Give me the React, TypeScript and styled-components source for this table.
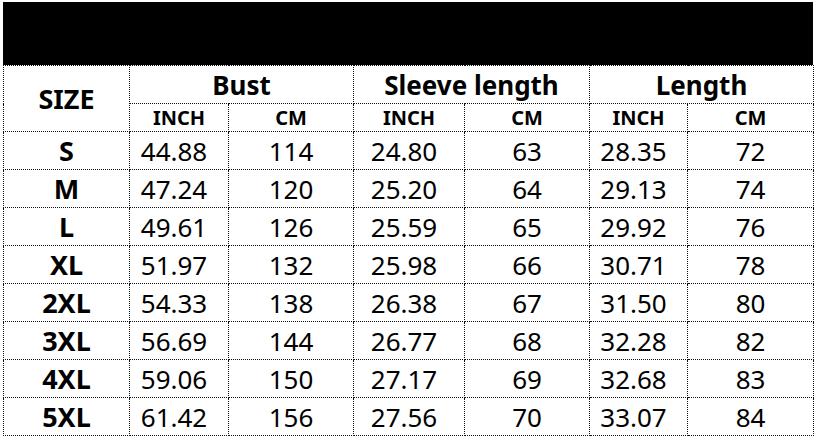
import styled, { createGlobalStyle } from "styled-components";

const GlobalStyle = createGlobalStyle`
  html, body {
    margin: 0;
    background: #fff;
  }
  body {
    padding: 2px 0 0 3px;
    font-family: "Noto Sans", "Open Sans", sans-serif;
    color: #000;
  }
`;

const Sheet = styled.div`
  width: 810px;
`;

const Banner = styled.div`
  height: 63px;
  background: #000;
`;

const Table = styled.table`
  width: 810px;
  table-layout: fixed;
  border-collapse: collapse;
`;

const Cell = styled.td<{ $bold?: boolean; $size?: number; $shift?: number }>`
  border: 1px dotted #111;
  padding: 0 ${(p) => p.$shift || 0}px 0 0;
  text-align: center;
  vertical-align: middle;
  white-space: nowrap;
  font-size: ${(p) => p.$size || 26}px;
  font-weight: ${(p) => (p.$bold ? 700 : 400)};
  line-height: 1;
`;

const GroupRow = styled.tr`
  height: 38px;
`;

const UnitRow = styled.tr`
  height: 28px;
`;

const DataRow = styled.tr`
  height: 38px;
`;

const widths = [126, 99, 125, 111, 125, 98, 126];

const rows: [string, string, string, string, string, string, string][] = [
  ["S", "44.88", "114", "24.80", "63", "28.35", "72"],
  ["M", "47.24", "120", "25.20", "64", "29.13", "74"],
  ["L", "49.61", "126", "25.59", "65", "29.92", "76"],
  ["XL", "51.97", "132", "25.98", "66", "30.71", "78"],
  ["2XL", "54.33", "138", "26.38", "67", "31.50", "80"],
  ["3XL", "56.69", "144", "26.77", "68", "32.28", "82"],
  ["4XL", "59.06", "150", "27.17", "69", "32.68", "83"],
  ["5XL", "61.42", "156", "27.56", "70", "33.07", "84"],
];

function App() {
  return (
    <Sheet>
      <GlobalStyle />
      <Banner />
      <Table>
        <colgroup>
          {widths.map((w, i) => (
            <col key={i} style={{ width: w }} />
          ))}
        </colgroup>
        <thead>
          <GroupRow>
            <Cell as="th" rowSpan={2} $bold $size={27}>
              SIZE
            </Cell>
            <Cell as="th" colSpan={2} $bold $size={26}>
              Bust
            </Cell>
            <Cell as="th" colSpan={2} $bold $size={26}>
              Sleeve length
            </Cell>
            <Cell as="th" colSpan={2} $bold $size={26}>
              Length
            </Cell>
          </GroupRow>
          <UnitRow>
            {["INCH", "CM", "INCH", "CM", "INCH", "CM"].map((u, i) => (
              <Cell as="th" key={i} $bold $size={20}>
                {u}
              </Cell>
            ))}
          </UnitRow>
        </thead>
        <tbody>
          {rows.map((r) => (
            <DataRow key={r[0]}>
              <Cell $bold $size={27}>
                {r[0]}
              </Cell>
              {r.slice(1).map((v, i) => (
                <Cell key={i} $shift={i % 2 === 0 ? 10 : 0}>
                  {v}
                </Cell>
              ))}
            </DataRow>
          ))}
        </tbody>
      </Table>
    </Sheet>
  );
}

export default App;
